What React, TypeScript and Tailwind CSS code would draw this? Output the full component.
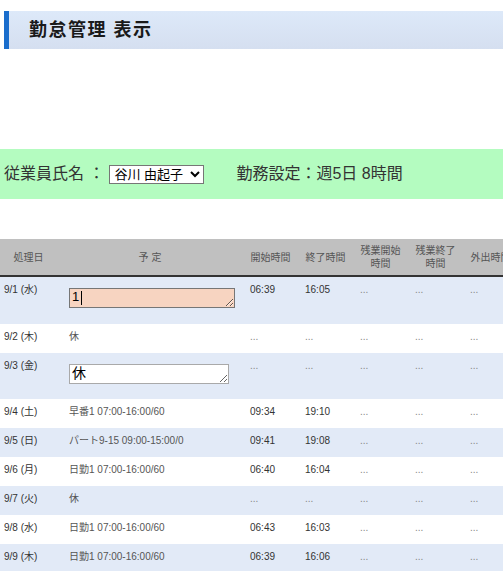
import React from 'react';

interface Row {
    date: string;
    plan: string;
    input?: 'focus' | 'plain';
    start: string;
    end: string;
}

const rows: Row[] = [
    { date: '9/1 (水)', plan: '1', input: 'focus', start: '06:39', end: '16:05' },
    { date: '9/2 (木)', plan: '休', start: '...', end: '...' },
    { date: '9/3 (金)', plan: '休', input: 'plain', start: '...', end: '...' },
    { date: '9/4 (土)', plan: '早番1 07:00-16:00/60', start: '09:34', end: '19:10' },
    { date: '9/5 (日)', plan: 'パート9-15 09:00-15:00/0', start: '09:41', end: '19:08' },
    { date: '9/6 (月)', plan: '日勤1 07:00-16:00/60', start: '06:40', end: '16:04' },
    { date: '9/7 (火)', plan: '休', start: '...', end: '...' },
    { date: '9/8 (水)', plan: '日勤1 07:00-16:00/60', start: '06:43', end: '16:03' },
    { date: '9/9 (木)', plan: '日勤1 07:00-16:00/60', start: '06:39', end: '16:06' },
];

const font = { fontFamily: '"Liberation Sans", "Noto Sans CJK JP", sans-serif' };

const Time: React.FC<{ v: string }> = ({ v }) => (
    <span className={v === '...' ? 'text-[#888]' : 'text-[#333]'}>{v}</span>
);

export default function App() {
    return (
        <div className="w-[503px] overflow-hidden bg-white" style={font}>
            {/* Title */}
            <div className="mt-[11px] ml-[4px] h-[38px] flex items-center border-l-[5px] border-[#1a6dcc] bg-gradient-to-b from-[#dde9f9] to-[#d5dff0] pl-[20px]">
                <h1 className="text-[18px] font-bold tracking-[1.5px] text-[#1a1a1a]">勤怠管理 表示</h1>
            </div>

            {/* Employee bar */}
            <div className="mt-[100px] h-[50px] bg-[#b4fcc0] flex items-center pl-[4px] text-[16px] text-[#333]">
                <span>従業員氏名 ：</span>
                <select
                    defaultValue="tanigawa"
                    className="ml-[5px] h-[19px] w-[95px] border border-[#767676] bg-white text-[13px] text-black leading-none"
                >
                    <option value="tanigawa">谷川 由起子</option>
                </select>
                <span className="ml-[32px]">勤務設定：週5日 8時間</span>
            </div>

            {/* Table */}
            <div className="mt-[40px] w-[503px] overflow-hidden">
                <table className="table-fixed border-collapse w-[573px] text-[10px]">
                    <colgroup>
                        <col className="w-[57px]" />
                        <col className="w-[186px]" />
                        <col className="w-[55px]" />
                        <col className="w-[55px]" />
                        <col className="w-[55px]" />
                        <col className="w-[55px]" />
                        <col className="w-[55px]" />
                        <col className="w-[55px]" />
                    </colgroup>
                    <thead>
                        <tr className="bg-[#c0c0c0] h-[37px] border-b-2 border-[#333] text-[#555] leading-[13px]">
                            <th className="font-normal text-center">処理日</th>
                            <th className="font-normal text-center">予 定</th>
                            <th className="font-normal text-center">開始時間</th>
                            <th className="font-normal text-center">終了時間</th>
                            <th className="font-normal text-center">残業開始<br />時間</th>
                            <th className="font-normal text-center">残業終了<br />時間</th>
                            <th className="font-normal text-center whitespace-nowrap">外出時間</th>
                            <th className="font-normal text-center whitespace-nowrap">戻り時間</th>
                        </tr>
                    </thead>
                    <tbody className="leading-[14px]">
                        {rows.map((r, i) => (
                            <tr key={r.date} className={i % 2 === 0 ? 'bg-[#e2eaf7]' : 'bg-white'}>
                                <td
                                    className={`align-top pl-[4px] pt-[6px] text-[#333] whitespace-nowrap ${
                                        r.input === 'focus' ? 'h-[48px]' : r.input === 'plain' ? 'h-[46px]' : 'h-[29px]'
                                    }`}
                                >
                                    {r.date}
                                </td>
                                <td className="align-top pl-[12px] pt-[6px] text-[#555] whitespace-nowrap">
                                    {r.input === 'focus' ? (
                                        <div className="relative mt-[5px] w-[166px]">
                                            <textarea
                                                defaultValue="1"
                                                className="block w-[166px] h-[20px] border border-[#767676] bg-[#f7d4c1] text-[13px] leading-[16px] px-[2px] text-black outline-none overflow-hidden"
                                            />
                                            <span className="absolute left-[12px] top-[3px] h-[14px] w-px bg-black" />
                                        </div>
                                    ) : r.input === 'plain' ? (
                                        <textarea
                                            defaultValue={r.plan}
                                            className="block mt-[5px] w-[160px] h-[20px] border border-[#a9a9a9] bg-white text-[14px] leading-[16px] px-[2px] text-black outline-none overflow-hidden"
                                        />
                                    ) : (
                                        r.plan
                                    )}
                                </td>
                                <td className="align-top pl-[7px] pt-[6px]"><Time v={r.start} /></td>
                                <td className="align-top pl-[7px] pt-[6px]"><Time v={r.end} /></td>
                                <td className="align-top pl-[7px] pt-[6px]"><Time v="..." /></td>
                                <td className="align-top pl-[7px] pt-[6px]"><Time v="..." /></td>
                                <td className="align-top pl-[7px] pt-[6px]"><Time v="..." /></td>
                                <td className="align-top pl-[7px] pt-[6px]"><Time v="..." /></td>
                            </tr>
                        ))}
                    </tbody>
                </table>
            </div>
        </div>
    );
}
